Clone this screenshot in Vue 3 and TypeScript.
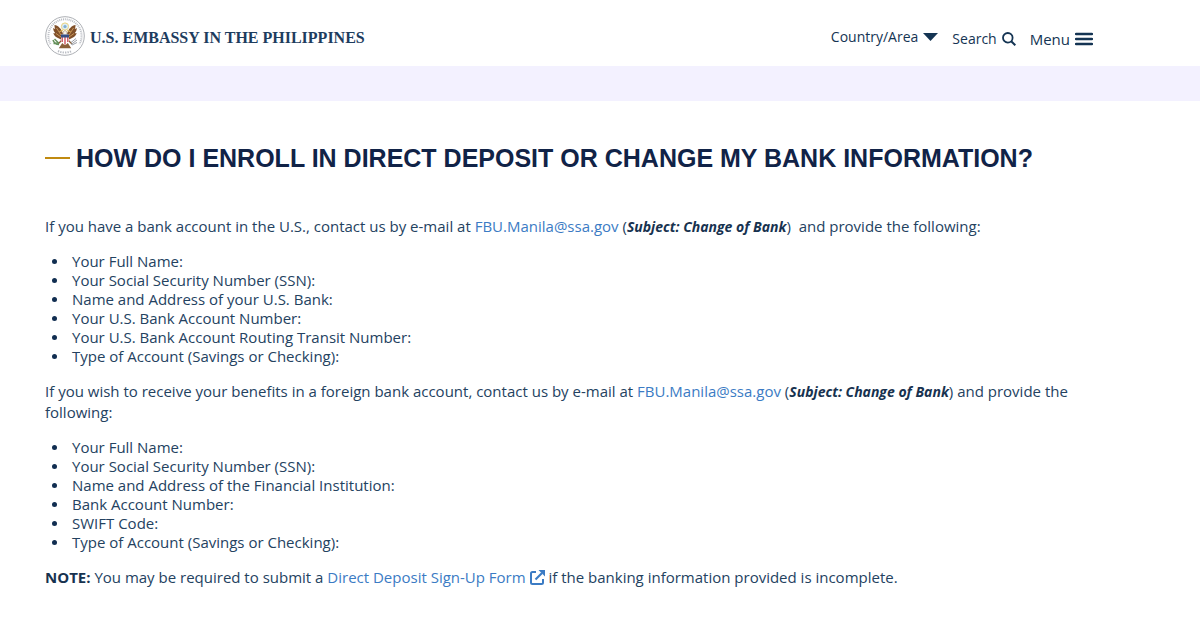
<script setup lang="ts">
const email = 'FBU.Manila@ssa.gov'

const usBankDetails: string[] = [
  'Your Full Name:',
  'Your Social Security Number (SSN):',
  'Name and Address of your U.S. Bank:',
  'Your U.S. Bank Account Number:',
  'Your U.S. Bank Account Routing Transit Number:',
  'Type of Account (Savings or Checking):',
]

const foreignBankDetails: string[] = [
  'Your Full Name:',
  'Your Social Security Number (SSN):',
  'Name and Address of the Financial Institution:',
  'Bank Account Number:',
  'SWIFT Code:',
  'Type of Account (Savings or Checking):',
]
</script>

<template>
  <header class="site-header">
    <a class="brand" href="#">
      <svg class="seal" viewBox="0 0 40 40" aria-hidden="true">
        <circle cx="20" cy="20" r="19.3" fill="#fff" stroke="#a3a6ab" stroke-width=".9" />
        <path d="M5.500 28A16.600 16.600 0 1 1 34.500 28" fill="none" stroke="#b9bcc3" stroke-width="2" stroke-dasharray="1 .9" />
        <path d="M13 35a16.600 16.600 0 0 0 14 0" fill="none" stroke="#b9bcc3" stroke-width="2" stroke-dasharray="1.300 1.100" />
        <circle cx="20" cy="10.500" r="3.600" fill="#dcebf4" stroke="#ecd47e" stroke-width="1" />
        <circle cx="20" cy="10.500" r="1.600" fill="#7fb0d2" />
        <path d="M18 18C16.500 12.500 13 9.500 9.500 9c0 1.800.2 2.800.7 3.800-1 0-1.500-.3-2.100-.7.2 2.300.9 3.900 2.200 5.100-.8.2-1.500 0-2.100-.3.8 2.300 2.300 4 4.300 4.800l5 2.500z" fill="#80502a" />
        <path d="M22 18c1.500-5.500 5-8.500 8.500-9 0 1.800-.2 2.800-.7 3.800 1 0 1.500-.3 2.100-.7-.2 2.300-.9 3.900-2.200 5.100.8.2 1.500 0 2.100-.3-.8 2.300-2.300 4-4.300 4.800l-5 2.500z" fill="#80502a" />
        <path d="M11.500 12l4.500 7M11 17.500l5 3.500M28.500 12L24 19M29 17.500L24 21" stroke="#c79558" stroke-width="1" />
        <path d="M17 24l-4 4M23 24l4 4M18 27l-3 4.500h10L22 27z" fill="#8a6038" stroke="#8a6038" stroke-width="1.300" />
        <path d="M8 24c1 3 3 4.500 6 4.500M8.500 27.500l5.500-.5M9.500 23l4 4" fill="none" stroke="#66915c" stroke-width="1.500" />
        <path d="M26 28.500l6-4.500M27 29l5-2.500M26 26.500l5-4" stroke="#9ca0a8" stroke-width="1" />
        <path d="M18 17c0-3 4-3 4 0l-.5 2h-3z" fill="#f5f0e7" stroke="#94714b" stroke-width=".5" />
        <path d="M16 18.500h8v5.500c0 2.500-2 4-4 5-2-1-4-2.500-4-5z" fill="#fff" />
        <path d="M17.200 20v6M20 20v8.500M22.800 20v6" stroke="#c94750" stroke-width="1.300" />
        <path d="M16 18.500h8v3h-8z" fill="#354f86" />
        <path d="M14.500 15.500l3.500-1M22 14.500l3.500 1" stroke="#e4bf5c" stroke-width="1.300" />
      </svg>
      <span class="brand-name">U.S. EMBASSY IN THE PHILIPPINES</span>
    </a>
    <nav class="tools" aria-label="Site tools">
      <button type="button" class="tool country">
        Country/Area
        <svg class="caret" viewBox="0 0 15 8" aria-hidden="true"><path d="M0 0h15L7.500 8z" fill="currentColor" /></svg>
      </button>
      <button type="button" class="tool">
        Search
        <svg class="glass" viewBox="0 0 14 14" aria-hidden="true">
          <circle cx="5.800" cy="5.800" r="4.800" fill="none" stroke="currentColor" stroke-width="1.800" />
          <path d="M9.200 9.200L13.300 13.300" stroke="currentColor" stroke-width="2" />
        </svg>
      </button>
      <button type="button" class="tool menu">
        Menu
        <svg class="bars" viewBox="0 0 18 14" aria-hidden="true">
          <path d="M1 2h16M1 7h16M1 12h16" stroke="currentColor" stroke-width="2.400" stroke-linecap="round" />
        </svg>
      </button>
    </nav>
  </header>
  <div class="band"></div>
  <main class="content">
    <h1>HOW DO I ENROLL IN DIRECT DEPOSIT OR CHANGE MY BANK INFORMATION?</h1>
    <p>
      If you have a bank account in the U.S., contact us by e-mail at
      <a :href="`mailto:${email}`">{{ email }}</a> (<strong class="subject"><em>Subject: Change of Bank</em></strong>)&nbsp; and provide the following:
    </p>
    <ul>
      <li v-for="item in usBankDetails" :key="item">{{ item }}</li>
    </ul>
    <p>
      If you wish to receive your benefits in a foreign bank account, contact us by e-mail at
      <a :href="`mailto:${email}`">{{ email }}</a> (<strong class="subject"><em>Subject: Change of Bank</em></strong>) and provide the following:
    </p>
    <ul>
      <li v-for="item in foreignBankDetails" :key="item">{{ item }}</li>
    </ul>
    <p>
      <strong>NOTE:</strong> You may be required to submit a
      <a href="#">Direct Deposit Sign-Up Form
        <svg class="external" viewBox="0 0 15 15" aria-hidden="true">
          <path d="M6 2H2.500Q1 2 1 3.500v9Q1 14 2.500 14h9q1.500 0 1.500-1.500V9" fill="none" stroke="currentColor" stroke-width="2" />
          <path d="M5.500 9.500L12 3" stroke="currentColor" stroke-width="2.200" />
          <path d="M8.500 0H15v6.500z" fill="currentColor" />
        </svg></a>
      if the banking information provided is incomplete.
    </p>
  </main>
</template>

<style>
body {
  margin: 0;
  background: #fff;
}
</style>

<style scoped>
.site-header {
  display: flex;
  align-items: center;
  justify-content: space-between;
  box-sizing: border-box;
  min-height: 66px;
  padding: 6px 107px 0 45px;
  color: #112e51;
  font-family: "Open Sans", "Noto Sans", sans-serif;
}

.brand {
  display: flex;
  align-items: center;
  gap: 5px;
  color: #1d3c5e;
  text-decoration: none;
}

.seal {
  width: 40px;
  height: 42px;
}

.brand-name {
  padding-top: 4px;
  font: bold 16px/20px "Liberation Serif", serif;
}

.tools {
  display: flex;
  align-items: center;
  gap: 14px;
  padding-top: 6px;
}

.tool {
  display: flex;
  align-items: center;
  gap: 5px;
  padding: 0;
  border: 0;
  background: none;
  color: #143453;
  font: 14px/20px "Open Sans", "Noto Sans", sans-serif;
  cursor: pointer;
}

.menu {
  font-size: 15px;
}

.country {
  padding-bottom: 4px;
}

.caret {
  width: 15px;
  height: 8px;
}

.glass {
  width: 14px;
  height: 14px;
}

.bars {
  width: 18px;
  height: 14px;
}

.band {
  height: 35px;
  background: #f3f1ff;
}

.content {
  padding: 41px 107px 40px 45px;
  color: #24425f;
  font: 15px/21px "Open Sans", "Noto Sans", sans-serif;
}

h1 {
  display: flex;
  align-items: center;
  gap: 6px;
  margin: 0 0 42px;
  color: #112347;
  font: bold 25px/32px "Liberation Sans", Arial, sans-serif;
}

h1::before {
  content: "";
  flex: none;
  width: 25px;
  height: 2px;
  background: #c08a10;
}

p {
  margin: 0 0 15px;
}

ul {
  margin: 0 0 15px;
  padding-left: 7px;
  line-height: 19px;
  list-style: none;
}

li {
  display: flex;
  align-items: center;
  gap: 15px;
}

li::before {
  content: "";
  flex: none;
  width: 5px;
  height: 5px;
  border-radius: 50%;
  background: #112e51;
}

a {
  color: #3b7bc4;
  text-decoration: none;
}

strong {
  color: #17324f;
}

.subject {
  font-size: 14px;
}

.external {
  width: 15px;
  height: 15px;
  vertical-align: -2px;
}
</style>
